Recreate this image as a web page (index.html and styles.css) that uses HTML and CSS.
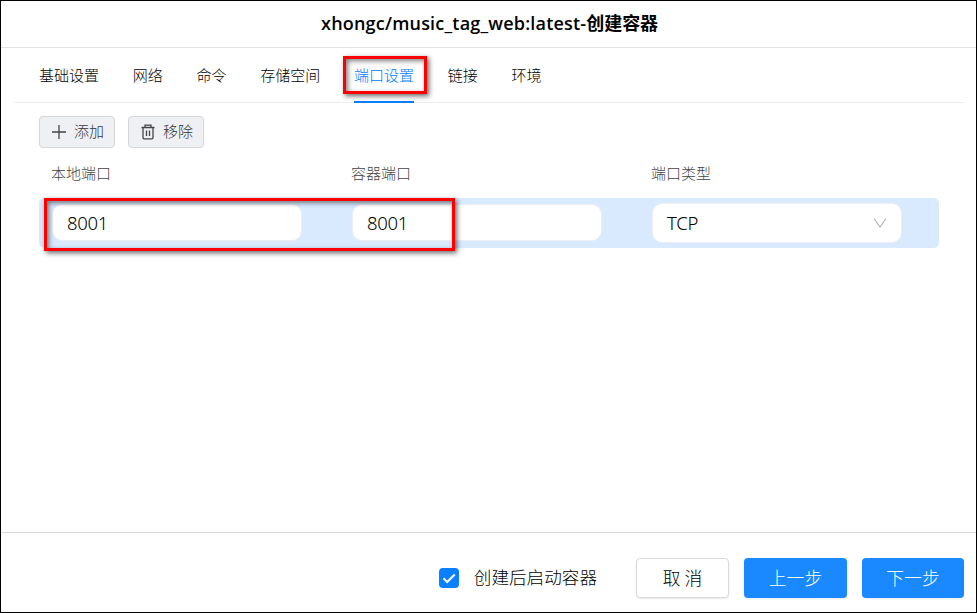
FILE: index.html
```html
<!DOCTYPE html>
<html lang="zh-CN">
<head>
<meta charset="utf-8">
<title>创建容器</title>
<link rel="stylesheet" href="styles.css">
</head>
<body>
<div class="dialog">
  <header class="header"><h1 class="title"><span class="image-name">xhongc/music_tag_web:latest-</span>创建容器</h1></header>
  <nav class="tabs">
    <a class="tab">基础设置</a>
    <a class="tab">网络</a>
    <a class="tab">命令</a>
    <a class="tab">存储空间</a>
    <a class="tab active">端口设置<span class="mark mark-tab"></span></a>
    <a class="tab">链接</a>
    <a class="tab">环境</a>
  </nav>
  <main class="content">
    <div class="toolbar">
      <button class="tool"><svg width="16" height="16" viewBox="0 0 16 16"><path d="M8 1v14M1 8h14"/></svg><span>添加</span></button>
      <button class="tool"><svg width="16" height="16" viewBox="0 0 16 16"><path d="M1.5 3.5h13M5 3.2V1.2h6v2M3 3.5V13.8a1 1 0 0 0 1 1h8a1 1 0 0 0 1-1V3.5M6.5 6.5v5.5M9.5 6.5v5.5"/></svg><span>移除</span></button>
    </div>
    <div class="grid labels"><span>本地端口</span><span>容器端口</span><span>端口类型</span></div>
    <div class="grid row">
      <div class="field">8001</div>
      <div class="field">8001</div>
      <div class="field select"><span>TCP</span><svg width="14" height="12" viewBox="0 0 14 12"><path d="M1 1.5l6 8.5 6-8.5"/></svg></div>
      <span class="mark mark-row"></span>
    </div>
  </main>
  <footer class="footer">
    <div class="check">
      <span class="box"><svg width="20" height="20" viewBox="0 0 20 20"><path d="M4.5 10.3l3.7 3.7 7.5-7.5"/></svg></span>
      <span class="check-label">创建后启动容器</span>
    </div>
    <button class="btn cancel">取 消</button>
    <button class="btn primary">上一步</button>
    <button class="btn primary next">下一步</button>
  </footer>
</div>
</body>
</html>
```
FILE: styles.css
```css
* { box-sizing: border-box; }
body {
  margin: 0;
  font-family: "Noto Sans CJK SC", sans-serif;
  font-weight: 300;
  color: #000;
  background: #fff;
}
button { font: inherit; padding: 0; }
svg { fill: none; flex: none; }
.dialog {
  width: 977px;
  height: 613px;
  border: 1px solid #000;
  display: flex;
  flex-direction: column;
}
.header {
  height: 47px;
  padding-left: 2px;
  border-bottom: 1px solid #e2e2e2;
  display: flex;
  justify-content: center;
}
.title {
  margin: 0;
  font: 600 18px/44px "Open Sans", "Noto Sans CJK SC", sans-serif;
  letter-spacing: -0.1px;
  white-space: nowrap;
}
.image-name { letter-spacing: 0.2px; }
.tabs {
  height: 55px;
  margin: 0 12px 0 13px;
  padding-left: 25px;
  border-bottom: 1px solid #ededed;
  display: flex;
  gap: 33.75px;
}
.tab {
  position: relative;
  height: 55px;
  font-size: 15px;
  line-height: 53px;
  white-space: nowrap;
}
.active {
  color: #007cff;
  border-bottom: 2px solid #0a80ff;
}
.mark {
  position: absolute;
  border: 3px solid #f00;
  box-shadow: 2px 2px 5px rgba(0, 0, 0, .6), inset 2px 2px 5px rgba(0, 0, 0, .5);
}
.mark-tab { left: -11px; top: 8px; width: 84px; height: 38px; }
.mark-row { left: 5px; top: 0; width: 411px; height: 53px; }
.content { flex: 1; padding: 13px 37px 0 38px; }
.toolbar { display: flex; gap: 13px; }
.tool {
  width: 76px;
  height: 32px;
  border: 1px solid #d6d7d9;
  border-radius: 4px;
  background: #eff0f4;
  color: #333;
  font-size: 15px;
  line-height: 26px;
  display: flex;
  align-items: center;
  padding: 0 0 1px 11px;
  gap: 7px;
}
.tool span { height: 28px; }
.tool svg { stroke: #444; stroke-width: 1.3; }
.grid {
  display: grid;
  grid-template-columns: 250px 250px 250px;
  column-gap: 50px;
  padding-left: 13px;
}
.labels {
  height: 50px;
  padding-left: 12px;
  font-size: 15px;
  line-height: 50px;
  color: #444;
}
.row {
  position: relative;
  width: 900px;
  height: 50px;
  border-radius: 5px;
  background: #d9eaff;
  align-items: center;
}
.field {
  height: 37px;
  margin-bottom: 1px;
  border: 1px solid #eceef2;
  border-radius: 10px;
  background: #fff;
  padding-left: 14px;
  font: 350 18.5px/35px "Noto Sans", sans-serif;
  letter-spacing: -0.3px;
}
.select {
  height: 40px;
  line-height: 38px;
  margin-bottom: 0;
  padding-right: 14px;
  display: flex;
  align-items: center;
  justify-content: space-between;
}
.select svg { stroke: #b5b5b5; stroke-width: 1.2; }
.footer {
  height: 80px;
  padding: 11px 12px 0 0;
  border-top: 1px solid #d9d9d9;
  display: flex;
  align-items: center;
  justify-content: flex-end;
}
.check { display: flex; align-items: center; gap: 15px; margin-right: 39px; }
.box { width: 20px; height: 20px; border-radius: 4px; background: #0a80ff; }
.box svg { display: block; stroke: #fff; stroke-width: 2; }
.check-label { font-size: 17.6px; line-height: 26px; padding-bottom: 2px; }
.btn {
  height: 40px;
  padding-bottom: 2px;
  border-radius: 4px;
  font-size: 17.8px;
  line-height: 36px;
  box-shadow: 0 1px 2px rgba(0, 0, 0, .08);
}
.cancel { width: 93px; border: 1px solid #d9d9d9; background: #fff; color: #000; }
.primary { width: 103px; margin-left: 15px; border: 0; background: #1a88ff; color: #fff; }
.next { width: 102px; }
```
